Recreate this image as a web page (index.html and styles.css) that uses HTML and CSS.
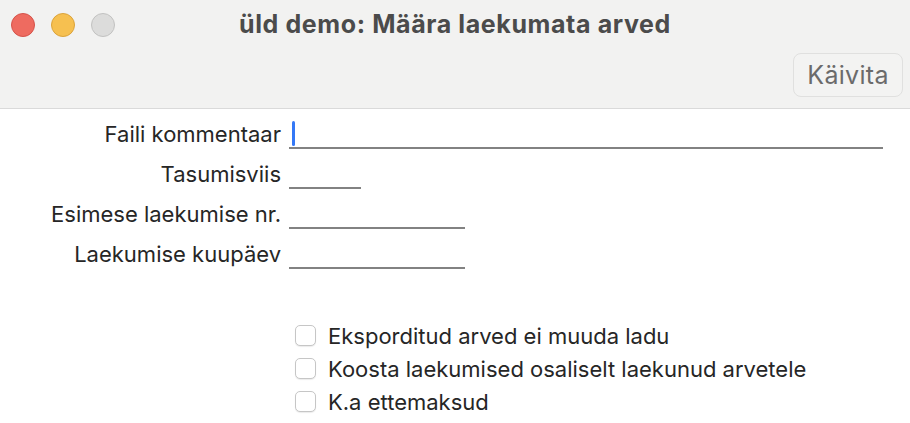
FILE: index.html
```html
<!DOCTYPE html>
<html lang="et">
<head>
  <meta charset="UTF-8">
  <meta name="viewport" content="width=device-width, initial-scale=1.0">
  <title>üld demo: Määra laekumata arved</title>
  <link rel="stylesheet" href="styles.css">
</head>
<body>

  <!-- Window header: title bar + toolbar -->
  <header class="window-header">
    <div class="title-bar">
      <div class="lights">
        <span class="light red"></span>
        <span class="light yellow"></span>
        <span class="light gray"></span>
      </div>
      <h1 class="title">üld demo: Määra laekumata arved</h1>
      <div></div>
    </div>
    <div class="toolbar">
      <button class="run-button">Käivita</button>
    </div>
  </header>

  <!-- Form fields -->
  <main class="form">
    <div class="row">
      <label class="label">Faili kommentaar</label>
      <div class="field field-wide"><span class="caret"></span></div>
    </div>
    <div class="row">
      <label class="label">Tasumisviis</label>
      <div class="field field-short"></div>
    </div>
    <div class="row">
      <label class="label">Esimese laekumise nr.</label>
      <div class="field field-mid"></div>
    </div>
    <div class="row">
      <label class="label">Laekumise kuupäev</label>
      <div class="field field-mid"></div>
    </div>

    <!-- Options -->
    <div class="options">
      <label class="option"><span class="checkbox"></span>Eksporditud arved ei muuda ladu</label>
      <label class="option"><span class="checkbox"></span>Koosta laekumised osaliselt laekunud arvetele</label>
      <label class="option"><span class="checkbox"></span>K.a ettemaksud</label>
    </div>
  </main>

</body>
</html>
```

FILE: styles.css
```css
/* Reset */
* {
  margin: 0;
  padding: 0;
  box-sizing: border-box;
}

body {
  font-family: Inter, "Noto Sans", sans-serif;
  background-color: #fff;
  color: #262626;
  width: 910px;
  height: 423px;
  overflow: hidden;
}

/* Header */
.window-header {
  background-color: #f2f2f1;
  border-bottom: 1px solid #dadada;
  height: 109px;
}

.title-bar {
  display: grid;
  grid-template-columns: 1fr auto 1fr;
  align-items: center;
  height: 48px;
}

.lights {
  display: flex;
  gap: 16px;
  padding-left: 11px;
  padding-top: 1px;
}

.light {
  width: 24px;
  height: 24px;
  border-radius: 50%;
  border: 1px solid;
}

.light.red {
  background-color: #ee6b60;
  border-color: #d5534a;
}

.light.yellow {
  background-color: #f6c050;
  border-color: #dba33b;
}

.light.gray {
  background-color: #dcdcdb;
  border-color: #c2c2c1;
}

.title {
  font-size: 25px;
  font-weight: 700;
  color: #4b4b4b;
  letter-spacing: 0.6px;
  line-height: 30px;
  margin-top: -1px;
}

.toolbar {
  display: flex;
  justify-content: flex-end;
  padding: 5px 7px 0 0;
}

.run-button {
  width: 110px;
  height: 44px;
  font-family: inherit;
  font-size: 25px;
  color: #6b6b6b;
  background-color: #f3f3f2;
  border: 1.5px solid #e0e0df;
  border-radius: 8px;
  letter-spacing: 0.3px;
}

/* Form */
.row {
  display: flex;
  align-items: flex-end;
  height: 40px;
}

.label {
  width: 282px;
  text-align: right;
  font-size: 22px;
  line-height: 22px;
  padding-bottom: 4px;
  padding-right: 1px;
}

.field {
  position: relative;
  margin-left: 7px;
  height: 30px;
  border-bottom: 2px solid #828282;
}

.field-wide {
  width: 594px;
}

.field-short {
  width: 72px;
}

.field-mid {
  width: 176px;
}

.caret {
  position: absolute;
  left: 3px;
  top: 2px;
  width: 3px;
  height: 25px;
  border-radius: 2px;
  background-color: #3478f6;
}

/* Checkbox options */
.options {
  display: flex;
  flex-direction: column;
  margin-top: 50px;
  padding-left: 295px;
}

.option {
  display: flex;
  align-items: center;
  gap: 12px;
  height: 33px;
  font-size: 22px;
}

.checkbox {
  width: 21px;
  height: 21px;
  border: 1px solid #c6c6c6;
  border-radius: 5px;
  background-color: #fff;
  box-shadow: 0 1px 1px rgba(0, 0, 0, 0.08);
}
```
